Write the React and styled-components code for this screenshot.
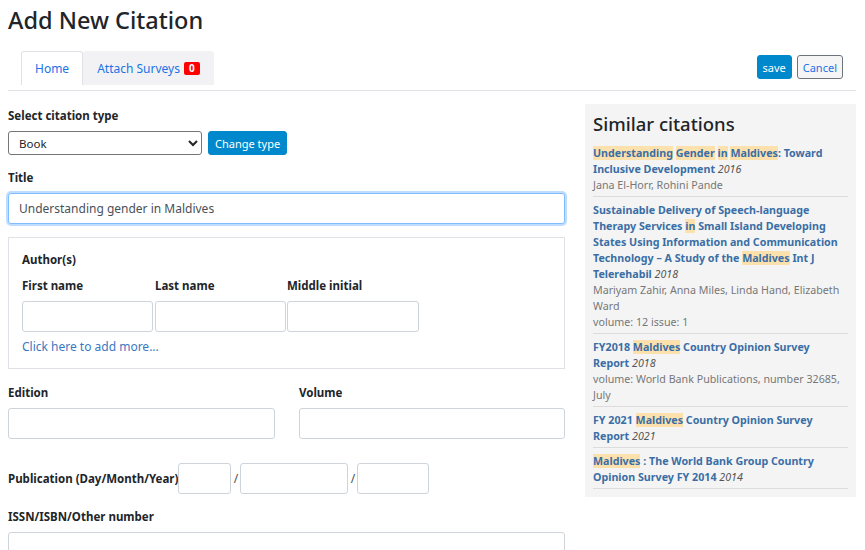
import React from "react";
import styled, { createGlobalStyle } from "styled-components";

const GlobalStyle = createGlobalStyle`
  body {
    margin: 0;
    background: #fff;
    font-family: "Noto Sans", "Open Sans", sans-serif;
    color: #212529;
  }
`;

const Page = styled.div`
  padding: 0 9px 0 8px;
  width: 848px;
`;

const Heading = styled.h1`
  margin: 0;
  padding-top: 5px;
  height: 46px;
  font-size: 23.5px;
  font-weight: 500;
  line-height: 30px;
  color: #212529;
`;

const TabBar = styled.div`
  display: flex;
  align-items: flex-start;
  justify-content: space-between;
  padding: 0 13px;
  height: 39px;
  border-bottom: 1px solid #dee2e6;
`;

const Tabs = styled.div`
  display: flex;
  height: 34px;
`;

const Tab = styled.div`
  display: flex;
  align-items: center;
  gap: 4px;
  padding: 0 13px;
  font-size: 12px;
  color: #1a73e8;
  background: ${(p) => (p.$active ? "#fff" : "#f2f2f4")};
  border: 1px solid ${(p) => (p.$active ? "#dee2e6" : "#f2f2f4")};
  border-bottom: none;
  border-radius: 3px 3px 0 0;
`;

const Badge = styled.span`
  background: #f00;
  color: #fff;
  font-size: 10px;
  font-weight: 700;
  padding: 0 5px;
  line-height: 13px;
  border-radius: 2px;
`;

const Actions = styled.div`
  display: flex;
  gap: 5px;
  padding-top: 4px;
`;

const Button = styled.button`
  font-family: inherit;
  font-size: 11px;
  height: 24px;
  padding: 0 ${(p) => (p.$wide ? "6px" : "5px")};
  border-radius: 3px;
  cursor: pointer;
  background: ${(p) => (p.$primary ? "#0088cc" : "#f5f5f5")};
  color: ${(p) => (p.$primary ? "#fff" : "#1a73e8")};
  border: 1px solid ${(p) => (p.$primary ? "#0088cc" : "#6c757d")};
`;

const Main = styled.div`
  display: grid;
  grid-template-columns: 557px 271px;
  gap: 20px;
  align-items: start;
  padding-top: 13px;
`;

const Form = styled.div`
  display: flex;
  flex-direction: column;
  padding-top: 4px;
`;

const Label = styled.div`
  font-size: 11.5px;
  font-weight: 700;
  line-height: 16px;
  margin: ${(p) => p.$m || "0 0 7px"};
  white-space: nowrap;
`;

const Row = styled.div`
  display: flex;
  align-items: center;
  gap: ${(p) => p.$gap || "6px"};
`;

const Select = styled.select`
  font-family: inherit;
  font-size: 11.5px;
  width: 194px;
  height: 24px;
  border: 1px solid #767676;
  border-radius: 3px;
  padding: 0 4px 0 6px;
  background: #fff;
  color: #212529;
`;

const Input = styled.input`
  box-sizing: border-box;
  font-family: inherit;
  font-size: 12px;
  color: #495057;
  width: ${(p) => p.$w || "100%"};
  height: ${(p) => p.$h || "31px"};
  padding: 0 10px;
  border: 1px solid ${(p) => (p.$focus ? "#80bdff" : "#ced4da")};
  border-radius: 3px;
  box-shadow: ${(p) => (p.$focus ? "0 0 0 2px rgba(0,123,255,.25)" : "none")};
  outline: none;
  background: #fff;
`;

const Section = styled.div`
  margin-top: ${(p) => p.$mt || "0"};
`;

const AuthorBox = styled.div`
  border: 1px solid #dee2e6;
  padding: 14px 13px 13px;
  margin-top: 13px;
`;

const AuthorGrid = styled.div`
  display: grid;
  grid-template-columns: 133px 132px 132px;
`;

const AddMore = styled.a`
  display: block;
  font-size: 12px;
  color: #3a78c2;
  margin-top: 7px;
  line-height: 16px;
`;

const TwoCol = styled.div`
  display: grid;
  grid-template-columns: 267px 266px;
  column-gap: 24px;
  margin-top: 16px;
`;

const Slash = styled.span`
  width: 9px;
  text-align: center;
  font-size: 12px;
  color: #495057;
`;

const Sidebar = styled.aside`
  background: #f4f4f4;
  padding: 8px 8px 8px 8px;
`;

const SideTitle = styled.h3`
  margin: 0 0 9px;
  font-size: 18.5px;
  font-weight: 500;
  line-height: 24px;
  color: #212529;
`;

const Item = styled.div`
  padding: 5px 0 3px;
  border-bottom: 1px solid #dcdcdc;
  font-size: 10.7px;
  line-height: 16px;
  &:first-of-type {
    padding-top: 0;
  }
`;

const ItemTitle = styled.span`
  font-weight: 700;
  color: #3a6ea5;
`;

const Mark = styled.mark`
  background: #fde1ad;
  color: inherit;
`;

const Year = styled.i`
  font-weight: 400;
  color: #555;
`;

const Meta = styled.div`
  color: #777;
`;

const citations = [
  {
    title: [["Understanding", 1], [" ", 0], ["Gender", 1], [" ", 0], ["in", 1], [" ", 0], ["Maldives", 1], [": Toward Inclusive Development", 0]],
    year: "2016",
    meta: ["Jana El-Horr, Rohini Pande"],
  },
  {
    title: [["Sustainable Delivery of Speech-language Therapy Services ", 0], ["in", 1], [" Small Island Developing States Using Information and Communication Technology – A Study of the ", 0], ["Maldives", 1], [" Int J Telerehabil", 0]],
    year: "2018",
    meta: ["Mariyam Zahir, Anna Miles, Linda Hand, Elizabeth Ward", "volume: 12 issue: 1"],
  },
  {
    title: [["FY2018 ", 0], ["Maldives", 1], [" Country Opinion Survey Report", 0]],
    year: "2018",
    meta: ["volume: World Bank Publications, number 32685, July"],
  },
  {
    title: [["FY 2021 ", 0], ["Maldives", 1], [" Country Opinion Survey Report", 0]],
    year: "2021",
    meta: [],
  },
  {
    title: [["Maldives", 1], [" : The World Bank Group Country Opinion Survey FY 2014", 0]],
    year: "2014",
    meta: [],
  },
];

const App = () => {
  return (
    <>
      <GlobalStyle />
      <Page>
        <Heading>Add New Citation</Heading>
        <TabBar>
          <Tabs>
            <Tab $active>Home</Tab>
            <Tab>
              Attach Surveys <Badge>0</Badge>
            </Tab>
          </Tabs>
          <Actions>
            <Button $primary>save</Button>
            <Button>Cancel</Button>
          </Actions>
        </TabBar>
        <Main>
          <Form>
            <Label>Select citation type</Label>
            <Row>
              <Select defaultValue="Book">
                <option>Book</option>
                <option>Journal article</option>
                <option>Report</option>
              </Select>
              <Button $primary $wide>Change type</Button>
            </Row>
            <Section $mt="15px">
              <Label>Title</Label>
              <Input $focus defaultValue="Understanding gender in Maldives" />
            </Section>
            <AuthorBox>
              <Label $m="0 0 10px">Author(s)</Label>
              <AuthorGrid>
                <Label>First name</Label>
                <Label>Last name</Label>
                <Label>Middle initial</Label>
                <Input $w="131px" />
                <Input $w="131px" />
                <Input $w="132px" />
              </AuthorGrid>
              <AddMore>Click here to add more...</AddMore>
            </AuthorBox>
            <TwoCol>
              <div>
                <Label>Edition</Label>
                <Input />
              </div>
              <div>
                <Label>Volume</Label>
                <Input />
              </div>
            </TwoCol>
            <Section $mt="24px">
              <Row $gap="0">
                <Label $m="0">Publication (Day/Month/Year)</Label>
                <Input $w="53px" />
                <Slash>/</Slash>
                <Input $w="108px" />
                <Slash>/</Slash>
                <Input $w="72px" />
              </Row>
            </Section>
            <Section $mt="15px">
              <Label>ISSN/ISBN/Other number</Label>
              <Input />
            </Section>
          </Form>
          <Sidebar>
            <SideTitle>Similar citations</SideTitle>
            {citations.map((c, i) => (
              <Item key={i}>
                <ItemTitle>
                  {c.title.map(([t, h], j) => (h ? <Mark key={j}>{t}</Mark> : <span key={j}>{t}</span>))}
                </ItemTitle>{" "}
                <Year>{c.year}</Year>
                {c.meta.map((m, j) => (
                  <Meta key={j}>{m}</Meta>
                ))}
              </Item>
            ))}
          </Sidebar>
        </Main>
      </Page>
    </>
  );
};

export default App;
